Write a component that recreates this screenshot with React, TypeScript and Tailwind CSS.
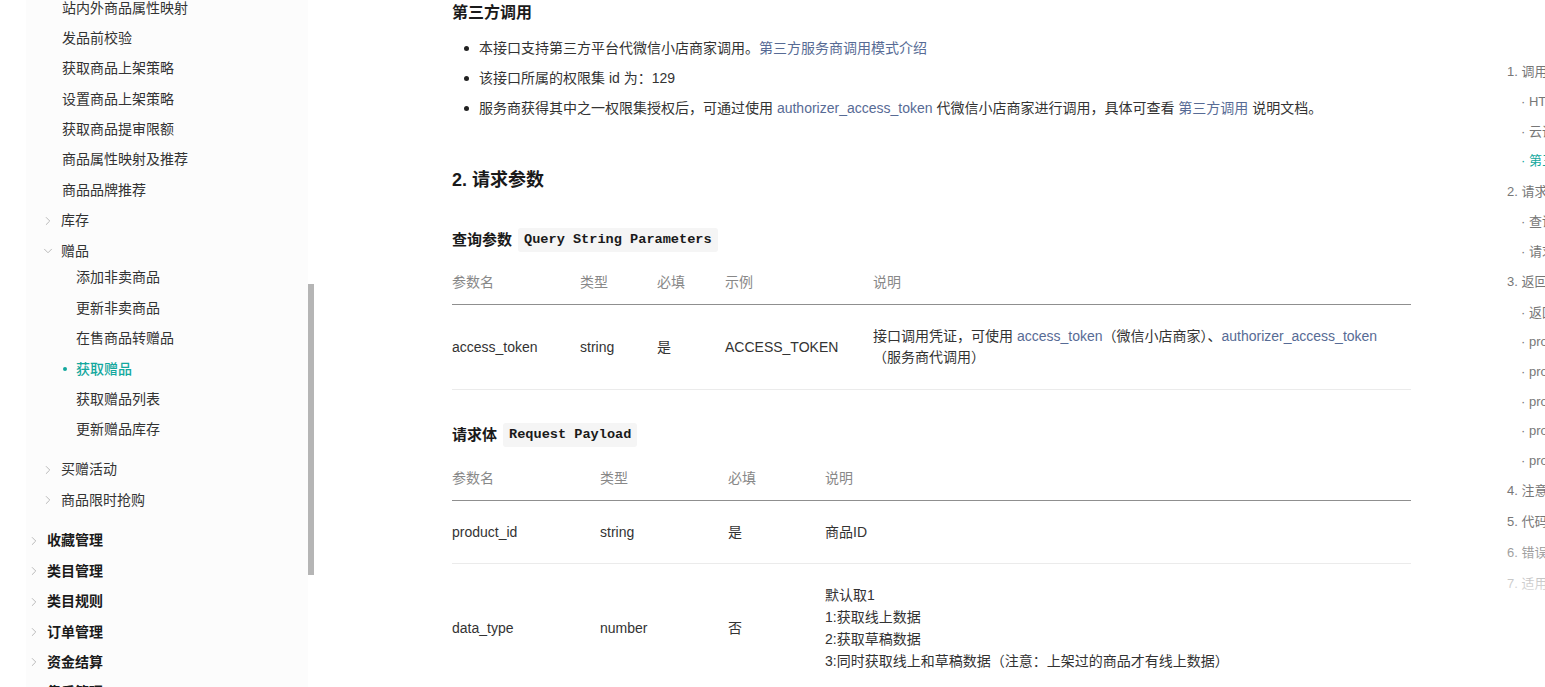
import React from "react";
import { ChevronRight, ChevronDown } from "lucide-react";

const link = "text-[#576b95]";

const Code = ({ children }: { children: React.ReactNode }) => (
  <code className="ml-[6px] inline-block rounded-[3px] bg-[#f5f5f5] px-[6px] font-['Liberation_Mono',monospace] text-[13.6px] font-bold leading-[24px] text-[#1a1a1a]">
    {children}
  </code>
);

const Chevron = ({ open }: { open?: boolean }) =>
  open ? (
    <ChevronDown size={14} strokeWidth={1.5} className="mr-[6px] text-[#b0b0b0]" />
  ) : (
    <ChevronRight size={14} strokeWidth={1.5} className="mr-[6px] text-[#b0b0b0]" />
  );

const Sidebar = () => {
  const level2 = ["站内外商品属性映射", "发品前校验", "获取商品上架策略", "设置商品上架策略", "获取商品提审限额", "商品属性映射及推荐", "商品品牌推荐"];
  const gifts = ["添加非卖商品", "更新非卖商品", "在售商品转赠品", "获取赠品", "获取赠品列表", "更新赠品库存"];
  const top = ["收藏管理", "类目管理", "类目规则", "订单管理", "资金结算", "售后管理"];

  return (
    <div className="relative w-[316px] shrink-0">
      <nav className="ml-[26px] h-[687px] w-[282px] overflow-hidden bg-[#fcfcfc] text-[14px] text-[#333]">
        <div className="-mt-[7.2px]">
          {level2.map((t) => (
            <div key={t} className="flex h-[30.4px] items-center pl-[36px]">
              {t}
            </div>
          ))}
          <div className="flex h-[30.4px] items-center pl-[15px]">
            <Chevron />
            库存
          </div>
          <div className="flex h-[30.4px] items-center pl-[15px]">
            <Chevron open />
            赠品
          </div>
          <div className="-mt-[3.6px] mb-[9.6px]">
            {gifts.map((t) =>
              t === "获取赠品" ? (
                <div key={t} className="flex h-[30.4px] items-center pl-[37px] font-medium text-[#13a89e]">
                  <span className="mr-[9px] h-[4px] w-[4px] rounded-full bg-[#13a89e]" />
                  {t}
                </div>
              ) : (
                <div key={t} className="flex h-[30.4px] items-center pl-[50px]">
                  {t}
                </div>
              )
            )}
          </div>
          <div className="flex h-[30.4px] items-center pl-[15px]">
            <Chevron />
            买赠活动
          </div>
          <div className="flex h-[30.4px] items-center pl-[15px]">
            <Chevron />
            商品限时抢购
          </div>
          <div className="mt-[10.2px]">
            {top.map((t) => (
              <div key={t} className="flex h-[30.4px] items-center pl-[1px] font-bold text-[#1a1a1a]">
                <Chevron />
                {t}
              </div>
            ))}
          </div>
        </div>
      </nav>
      {/* scrollbar thumb */}
      <div className="absolute left-[308px] top-[284px] h-[291px] w-[6px] bg-[#b5b5b5]" />
    </div>
  );
};

const Th = ({ w, children }: { w?: string; children: React.ReactNode }) => (
  <th className={`py-[11px] text-left font-normal leading-[22px] text-[#888] ${w ?? ""}`}>{children}</th>
);

const Td = ({ children }: { children: React.ReactNode }) => (
  <td className="py-[20px] align-middle leading-[22px]">{children}</td>
);

const Main = () => (
  <main className="ml-[136px] w-[959px] shrink-0 text-[14px] text-[#333]">
    <h3 className="mt-[1px] text-[16px] font-bold leading-[24px] text-[#1a1a1a]">第三方调用</h3>
    <ul className="mt-[8px]">
      <li className="flex h-[30px] items-center">
        <span className="ml-[12px] mr-[10px] h-[5px] w-[5px] rounded-full bg-[#222]" />
        本接口支持第三方平台代微信小店商家调用。<span className={link}>第三方服务商调用模式介绍</span>
      </li>
      <li className="flex h-[30px] items-center">
        <span className="ml-[12px] mr-[10px] h-[5px] w-[5px] rounded-full bg-[#222]" />
        该接口所属的权限集 id 为：129
      </li>
      <li className="flex h-[30px] items-center whitespace-pre">
        <span className="ml-[12px] mr-[10px] h-[5px] w-[5px] rounded-full bg-[#222]" />
        服务商获得其中之一权限集授权后，可通过使用 <span className={link}>authorizer_access_token</span> 代微信小店商家进行调用，具体可查看{" "}
        <span className={link}>第三方调用</span> 说明文档。
      </li>
    </ul>

    <h2 className="mt-[43px] text-[18px] font-bold leading-[28px] text-[#1a1a1a]">2. 请求参数</h2>

    <h3 className="mt-[34px] flex h-[24px] items-center text-[15px] font-bold text-[#1a1a1a]">
      查询参数<Code>Query String Parameters</Code>
    </h3>
    <table className="mt-[8px] w-full border-collapse">
      <thead>
        <tr className="border-b border-[#8f8f8f]">
          <Th w="w-[128px]">参数名</Th>
          <Th w="w-[77px]">类型</Th>
          <Th w="w-[68px]">必填</Th>
          <Th w="w-[148px]">示例</Th>
          <Th>说明</Th>
        </tr>
      </thead>
      <tbody>
        <tr className="border-b border-[#ebebeb]">
          <td className="py-[21px] leading-[22px]">access_token</td>
          <td className="py-[21px] leading-[22px]">string</td>
          <td className="py-[21px] leading-[22px]">是</td>
          <td className="py-[21px] leading-[22px]">ACCESS_TOKEN</td>
          <td className="py-[21px] leading-[21px]">
            接口调用凭证，可使用 <span className={link}>access_token</span>（微信小店商家）、<span className={link}>authorizer_access_token</span>
            <br />
            （服务商代调用）
          </td>
        </tr>
      </tbody>
    </table>

    <h3 className="mt-[33px] flex h-[24px] items-center text-[15px] font-bold text-[#1a1a1a]">
      请求体<Code>Request Payload</Code>
    </h3>
    <table className="mt-[9px] w-full border-collapse">
      <thead>
        <tr className="border-b border-[#8f8f8f]">
          <Th w="w-[148px]">参数名</Th>
          <Th w="w-[128px]">类型</Th>
          <Th w="w-[97px]">必填</Th>
          <Th>说明</Th>
        </tr>
      </thead>
      <tbody>
        <tr className="border-b border-[#ebebeb]">
          <Td>product_id</Td>
          <Td>string</Td>
          <Td>是</Td>
          <Td>商品ID</Td>
        </tr>
        <tr>
          <Td>data_type</Td>
          <Td>number</Td>
          <Td>否</Td>
          <Td>
            默认取1
            <br />
            1:获取线上数据
            <br />
            2:获取草稿数据
            <br />
            3:同时获取线上和草稿数据（注意：上架过的商品才有线上数据）
          </Td>
        </tr>
      </tbody>
    </table>
  </main>
);

const toc: { t: string; lv: 1 | 2; active?: boolean }[] = [
  { t: "1. 调用方式", lv: 1 },
  { t: "HTTPS 调用", lv: 2 },
  { t: "云调用", lv: 2 },
  { t: "第三方调用", lv: 2, active: true },
  { t: "2. 请求参数", lv: 1 },
  { t: "查询参数", lv: 2 },
  { t: "请求体", lv: 2 },
  { t: "3. 返回参数", lv: 1 },
  { t: "返回体", lv: 2 },
  { t: "product", lv: 2 },
  { t: "product.sku", lv: 2 },
  { t: "product.attr", lv: 2 },
  { t: "product.desc", lv: 2 },
  { t: "product.info", lv: 2 },
  { t: "4. 注意事项", lv: 1 },
  { t: "5. 代码示例", lv: 1 },
  { t: "6. 错误码", lv: 1 },
  { t: "7. 适用范围", lv: 1 },
];

const Toc = () => (
  <aside className="relative ml-[96px] mt-[56px] w-[200px] shrink-0 whitespace-nowrap text-[13px] text-[#777]">
    {toc.map((i) =>
      i.lv === 1 ? (
        <div key={i.t} className="flex h-[31px] items-center">
          {i.t}
        </div>
      ) : (
        <div key={i.t} className={`flex h-[29.7px] items-center pl-[14px] ${i.active ? "text-[#13a89e]" : ""}`}>
          · {i.t}
        </div>
      )
    )}
    <div className="absolute left-0 top-[470px] h-[90px] w-full bg-gradient-to-b from-white/0 to-white" />
  </aside>
);

export default function App() {
  return (
    <div className="flex h-[687px] w-[1545px] overflow-hidden bg-white font-['Liberation_Sans','Noto_Sans_CJK_SC',sans-serif]">
      <Sidebar />
      <Main />
      <Toc />
    </div>
  );
}
